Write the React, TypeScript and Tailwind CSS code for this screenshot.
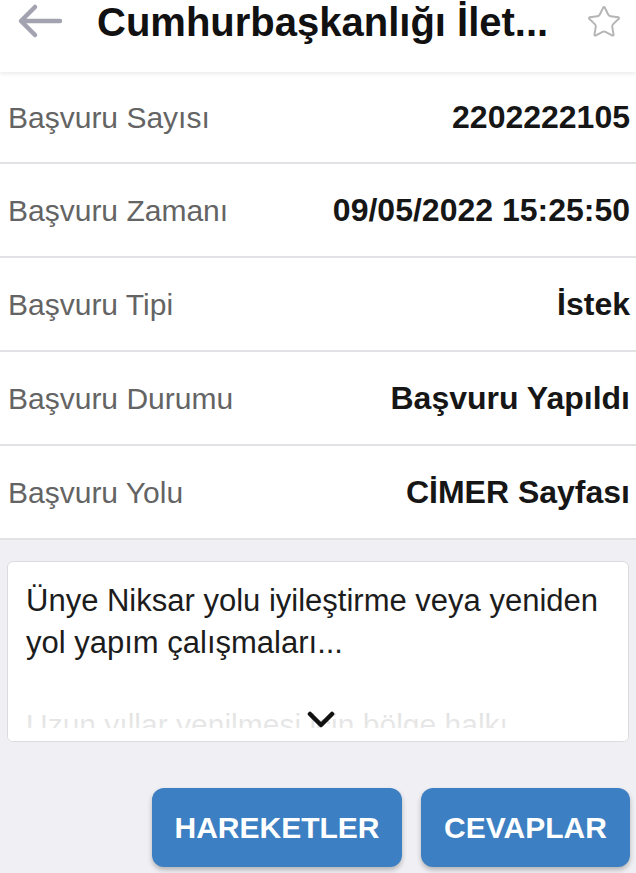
import { Star } from "lucide-react";

const satirlar = [
  { etiket: "Başvuru Sayısı", deger: "2202222105", h: "h-[92px]" },
  { etiket: "Başvuru Zamanı", deger: "09/05/2022 15:25:50", h: "h-[94px]" },
  { etiket: "Başvuru Tipi", deger: "İstek", h: "h-[94px]" },
  { etiket: "Başvuru Durumu", deger: "Başvuru Yapıldı", h: "h-[94px]" },
  { etiket: "Başvuru Yolu", deger: "CİMER Sayfası", h: "h-[94px]" },
];

export default function App() {
  return (
    <div className="min-h-[873px] w-[636px] bg-[#f0f0f4] font-['Liberation_Sans',Arial,sans-serif]">
      {/* Üst başlık */}
      <div className="relative z-10 flex h-[72px] items-start bg-white shadow-[0_2px_4px_rgba(0,0,0,0.08)]">
        <svg className="ml-[16px] mt-[3px]" width="48" height="36" viewBox="0 0 48 36" fill="none">
          <path
            d="M44 18 H6 M19 4 L5 18 L19 32"
            stroke="#a2a2b0"
            strokeWidth="4.5"
            strokeLinecap="round"
            strokeLinejoin="round"
          />
        </svg>
        <h1 className="ml-[33px] mt-[-1px] text-[40px] font-bold leading-[46px] text-[#111]">
          Cumhurbaşkanlığı İlet...
        </h1>
        <Star className="ml-auto mr-[14px] mt-[4px] h-[36px] w-[36px] text-[#b5b5b5]" strokeWidth={1.3} />
      </div>

      {/* Bilgi satırları */}
      <div className="bg-white">
        {satirlar.map((s) => (
          <div
            key={s.etiket}
            className={`flex ${s.h} items-center justify-between border-b-2 border-[#e2e2e6] pl-[8px] pr-[6px]`}
          >
            <span className="text-[30px] text-[#646464]">{s.etiket}</span>
            <span className="text-[32px] font-bold text-[#161616]">{s.deger}</span>
          </div>
        ))}
      </div>

      {/* Açıklama kartı */}
      <div className="mx-[7px] mt-[21px] h-[181px] overflow-hidden rounded-[6px] border border-[#dcdce0] bg-white">
        <div className="relative h-full pl-[18px] pr-[10px] pt-[18px]">
          <p className="text-[31px] leading-[42px] text-[#1c1c1c]">
            Ünye Niksar yolu iyileştirme veya yeniden yol yapım çalışmaları...
          </p>
          <p className="mt-[40px] whitespace-nowrap text-[30px] leading-[42px] text-[#1c1c1c]">
            Uzun yıllar yenilmesi için bölge halkı
          </p>
          <div className="absolute inset-x-0 bottom-[12px] h-[60px] bg-gradient-to-b from-white/80 to-white/90" />
          <div className="absolute inset-x-0 bottom-0 h-[13px] bg-white" />
          <svg
            className="absolute bottom-[11px] left-[299px]"
            width="28"
            height="20"
            viewBox="0 0 28 20"
            fill="none"
          >
            <path d="M3 4 L14 15 L25 4" stroke="#111" strokeWidth="4.5" strokeLinecap="round" strokeLinejoin="round" />
          </svg>
        </div>
      </div>

      {/* Butonlar */}
      <div className="mt-[46px] flex justify-end gap-[19px] pr-[6px]">
        <button className="h-[79px] w-[250px] rounded-[12px] bg-[#3c7fc2] text-[30px] font-bold text-white shadow-[0_3px_5px_rgba(0,0,0,0.25)]">
          HAREKETLER
        </button>
        <button className="h-[79px] w-[209px] rounded-[12px] bg-[#3c7fc2] text-[30px] font-bold text-white shadow-[0_3px_5px_rgba(0,0,0,0.25)]">
          CEVAPLAR
        </button>
      </div>
    </div>
  );
}
